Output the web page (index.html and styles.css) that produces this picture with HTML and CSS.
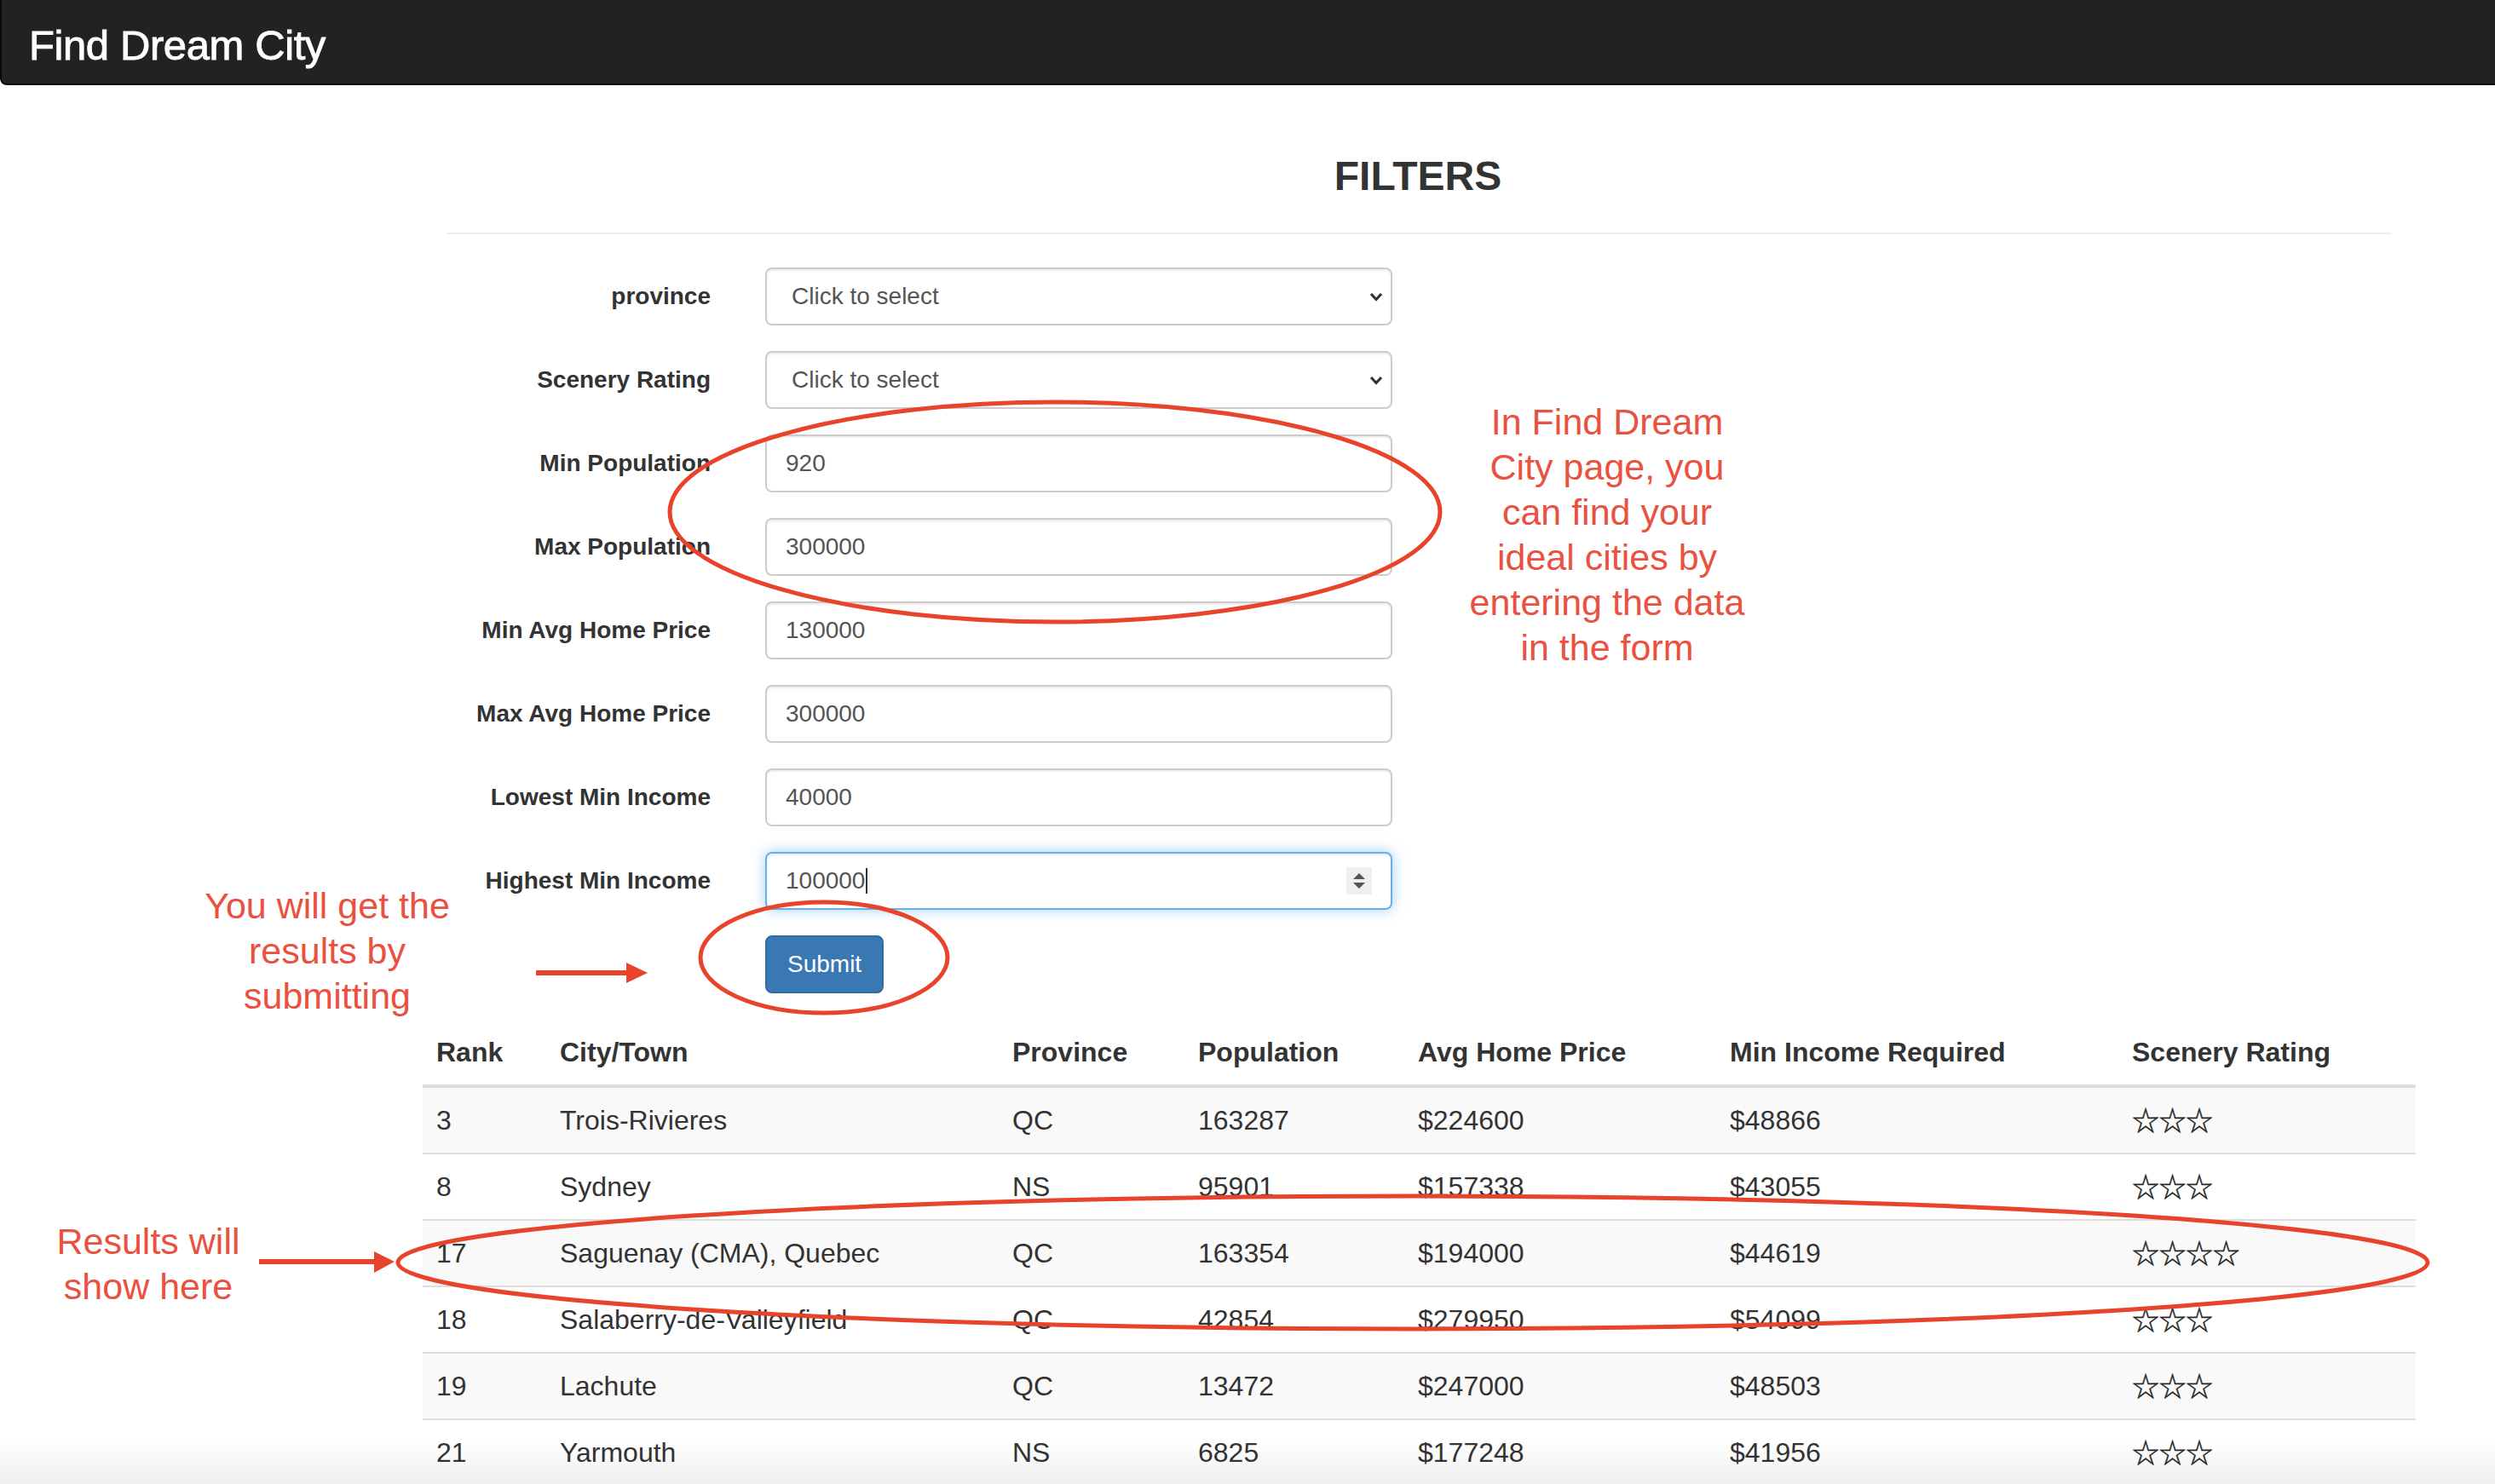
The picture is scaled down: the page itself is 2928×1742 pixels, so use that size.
FILE: index.html
```html
<!DOCTYPE html>
<html lang="en">
<head>
<meta charset="utf-8">
<title>Find Dream City</title>
<link rel="stylesheet" href="styles.css">
</head>
<body>
<header class="navbar"><span class="brand">Find Dream City</span></header>

<main class="page">
  <h3 class="title">FILTERS</h3>
  <hr class="rule">

  <form class="filters">
    <div class="form-row">
      <label class="lbl">province</label>
      <div class="field">
        <div class="control select"><span>Click to select</span>
          <svg class="chev" width="16" height="11" viewBox="0 0 16 11"><path d="M2 2 L8 8.5 L14 2" fill="none" stroke="#333" stroke-width="3.2"/></svg>
        </div>
      </div>
    </div>
    <div class="form-row">
      <label class="lbl">Scenery Rating</label>
      <div class="field">
        <div class="control select"><span>Click to select</span>
          <svg class="chev" width="16" height="11" viewBox="0 0 16 11"><path d="M2 2 L8 8.5 L14 2" fill="none" stroke="#333" stroke-width="3.2"/></svg>
        </div>
      </div>
    </div>
    <div class="form-row">
      <label class="lbl">Min Population</label>
      <div class="field"><input class="control" type="text" value="920"></div>
    </div>
    <div class="form-row">
      <label class="lbl">Max Population</label>
      <div class="field"><input class="control" type="text" value="300000"></div>
    </div>
    <div class="form-row">
      <label class="lbl">Min Avg Home Price</label>
      <div class="field"><input class="control" type="text" value="130000"></div>
    </div>
    <div class="form-row">
      <label class="lbl">Max Avg Home Price</label>
      <div class="field"><input class="control" type="text" value="300000"></div>
    </div>
    <div class="form-row">
      <label class="lbl">Lowest Min Income</label>
      <div class="field"><input class="control" type="text" value="40000"></div>
    </div>
    <div class="form-row">
      <label class="lbl">Highest Min Income</label>
      <div class="field">
        <div class="control focused"><span>100000</span><span class="caret"></span>
          <span class="spin"><svg width="30" height="32" viewBox="0 0 30 32"><path d="M8 14 L15 7 L22 14 Z M8 18 L22 18 L15 25 Z" fill="#555"/></svg></span>
        </div>
      </div>
    </div>
    <div class="form-row submit-row">
      <div></div>
      <div class="field"><button class="btn" type="button">Submit</button></div>
    </div>
  </form>

  <table class="results">
    <colgroup>
      <col class="c-rank"><col class="c-city"><col class="c-prov"><col class="c-pop"><col class="c-price"><col class="c-inc"><col class="c-rate">
    </colgroup>
    <thead>
      <tr><th>Rank</th><th>City/Town</th><th>Province</th><th>Population</th><th>Avg Home Price</th><th>Min Income Required</th><th>Scenery Rating</th></tr>
    </thead>
    <tbody>
      <tr><td>3</td><td>Trois-Rivieres</td><td>QC</td><td>163287</td><td>$224600</td><td>$48866</td><td><span class="stars">☆☆☆</span></td></tr>
      <tr><td>8</td><td>Sydney</td><td>NS</td><td>95901</td><td>$157338</td><td>$43055</td><td><span class="stars">☆☆☆</span></td></tr>
      <tr><td>17</td><td>Saguenay (CMA), Quebec</td><td>QC</td><td>163354</td><td>$194000</td><td>$44619</td><td><span class="stars">☆☆☆☆</span></td></tr>
      <tr><td>18</td><td>Salaberry-de-Valleyfield</td><td>QC</td><td>42854</td><td>$279950</td><td>$54099</td><td><span class="stars">☆☆☆</span></td></tr>
      <tr><td>19</td><td>Lachute</td><td>QC</td><td>13472</td><td>$247000</td><td>$48503</td><td><span class="stars">☆☆☆</span></td></tr>
      <tr><td>21</td><td>Yarmouth</td><td>NS</td><td>6825</td><td>$177248</td><td>$41956</td><td><span class="stars">☆☆☆</span></td></tr>
    </tbody>
  </table>
</main>

<svg class="marks" width="2928" height="1742" viewBox="0 0 2928 1742">
  <g fill="none" stroke="#e8432b" stroke-width="5">
    <ellipse cx="1238" cy="601" rx="452" ry="129"/>
    <ellipse cx="967" cy="1124" rx="145" ry="65"/>
    <ellipse cx="1658" cy="1482" rx="1191" ry="78"/>
  </g>
  <g stroke="#e8432b" stroke-width="6" fill="#e8432b">
    <line x1="629" y1="1142" x2="740" y2="1142"/>
    <polygon points="735,1130 760,1142 735,1154" stroke="none"/>
    <line x1="304" y1="1481" x2="444" y2="1481"/>
    <polygon points="439,1469 463,1481 439,1494" stroke="none"/>
  </g>
</svg>

<div class="note note-form">In Find Dream<br>City page, you<br>can find your<br>ideal cities by<br>entering the data<br>in the form</div>
<div class="note note-submit">You will get the<br>results by<br>submitting</div>
<div class="note note-results">Results will<br>show here</div>

<div class="fade"></div>
</body>
</html>
```

FILE: styles.css
```css
html, body {
  margin: 0;
  padding: 0;
  overflow: hidden;
  background: #fff;
}

body {
  font-family: "Liberation Sans", Arial, Helvetica, sans-serif;
  color: #333;
  position: relative;
  min-height: 1742px;
}

.navbar {
  box-sizing: border-box;
  height: 100px;
  background: #222;
  border-bottom: 2px solid #080808;
  border-left: 2px solid #080808;
  border-bottom-left-radius: 8px;
  padding: 23px 0 0 32px;
}

.brand {
  display: block;
  color: #fff;
  font-size: 49px;
  line-height: 60px;
  font-weight: normal;
  letter-spacing: -0.4px;
  -webkit-text-stroke: 0.9px #fff;
}

.page {
  margin-left: 470px;
  width: 2388px;
}

.title {
  margin: 80px 0 0;
  font-size: 48px;
  line-height: 53px;
  font-weight: bold;
  text-align: center;
  color: #333;
}

.rule {
  margin: 40px 52px 39px 55px;
  height: 0;
  border: 0;
  border-top: 2px solid #eee;
}

.filters {
  margin: 0;
}

.form-row {
  display: grid;
  grid-template-columns: 398px 796px;
  margin-bottom: 30px;
}

.submit-row {
  margin-bottom: 31px;
}

.lbl {
  display: block;
  text-align: right;
  padding: 14px 34px 0 0;
  font-size: 28px;
  line-height: 40px;
  font-weight: bold;
  color: #333;
}

.field {
  padding: 0 30px;
}

.control {
  display: flex;
  align-items: center;
  box-sizing: border-box;
  width: 100%;
  height: 68px;
  margin: 0;
  padding: 0 22px;
  border: 2px solid #ccc;
  border-radius: 8px;
  background: #fff;
  box-shadow: inset 0 2px 2px rgba(0, 0, 0, 0.075);
  font-family: "Liberation Sans", Arial, Helvetica, sans-serif;
  font-size: 28px;
  line-height: 40px;
  color: #555;
  outline: none;
}

.select {
  position: relative;
  padding-left: 29px;
  justify-content: space-between;
  padding-right: 9px;
}

.chev {
  display: block;
}

.focused {
  position: relative;
  border-color: #66afe9;
  box-shadow: inset 0 2px 2px rgba(0, 0, 0, 0.075), 0 0 16px rgba(102, 175, 233, 0.6);
}

.caret {
  display: inline-block;
  width: 2px;
  height: 30px;
  margin-left: 1px;
  background: #333;
}

.spin {
  position: absolute;
  right: 22px;
  top: 16px;
  width: 30px;
  height: 32px;
  background: #efefef;
}

.spin svg {
  display: block;
}

.btn {
  display: inline-block;
  margin: 0;
  padding: 12px 24px;
  border: 2px solid #2e6da4;
  border-radius: 8px;
  background: #3a78b4;
  color: #fff;
  font-family: "Liberation Sans", Arial, Helvetica, sans-serif;
  font-size: 28px;
  line-height: 40px;
}

.results {
  margin-left: 26px;
  width: 2339px;
  table-layout: fixed;
  border-collapse: separate;
  border-spacing: 0;
  font-size: 32px;
  color: #333;
}

.c-rank { width: 145px; }
.c-city { width: 531px; }
.c-prov { width: 218px; }
.c-pop { width: 258px; }
.c-price { width: 366px; }
.c-inc { width: 472px; }
.c-rate { width: 349px; }

.results th,
.results td {
  box-sizing: border-box;
  padding: 16px;
  height: 44px;
  line-height: 44px;
  text-align: left;
  vertical-align: middle;
  white-space: nowrap;
}

.results th {
  font-weight: bold;
  border-bottom: 4px solid #ddd;
}

.results tbody td {
  border-top: 2px solid #ddd;
}

.results tbody tr:first-child td {
  border-top: 0;
}

.results tbody tr:nth-child(odd) td {
  background: #f9f9f9;
}

.stars {
  display: inline-block;
  line-height: 40px;
  vertical-align: top;
  font-family: "Noto Sans CJK JP", "DejaVu Sans", sans-serif;
  font-size: 32px;
  color: #222;
  letter-spacing: -0.5px;
  -webkit-text-stroke: 0.4px #222;
}

.marks {
  position: absolute;
  left: 0;
  top: 0;
  pointer-events: none;
}

.note {
  position: absolute;
  font-family: "Liberation Sans", Arial, Helvetica, sans-serif;
  font-size: 43px;
  line-height: 53px;
  color: #ea5140;
  text-align: center;
}

.note-form {
  left: 1666px;
  top: 469px;
  width: 440px;
}

.note-submit {
  left: 194px;
  top: 1037px;
  width: 380px;
}

.note-results {
  left: 14px;
  top: 1431px;
  width: 320px;
}

.fade {
  position: absolute;
  left: 0;
  top: 1692px;
  width: 100%;
  height: 50px;
  background: linear-gradient(to bottom, rgba(0, 0, 0, 0), rgba(0, 0, 0, 0.065));
  pointer-events: none;
}
```
